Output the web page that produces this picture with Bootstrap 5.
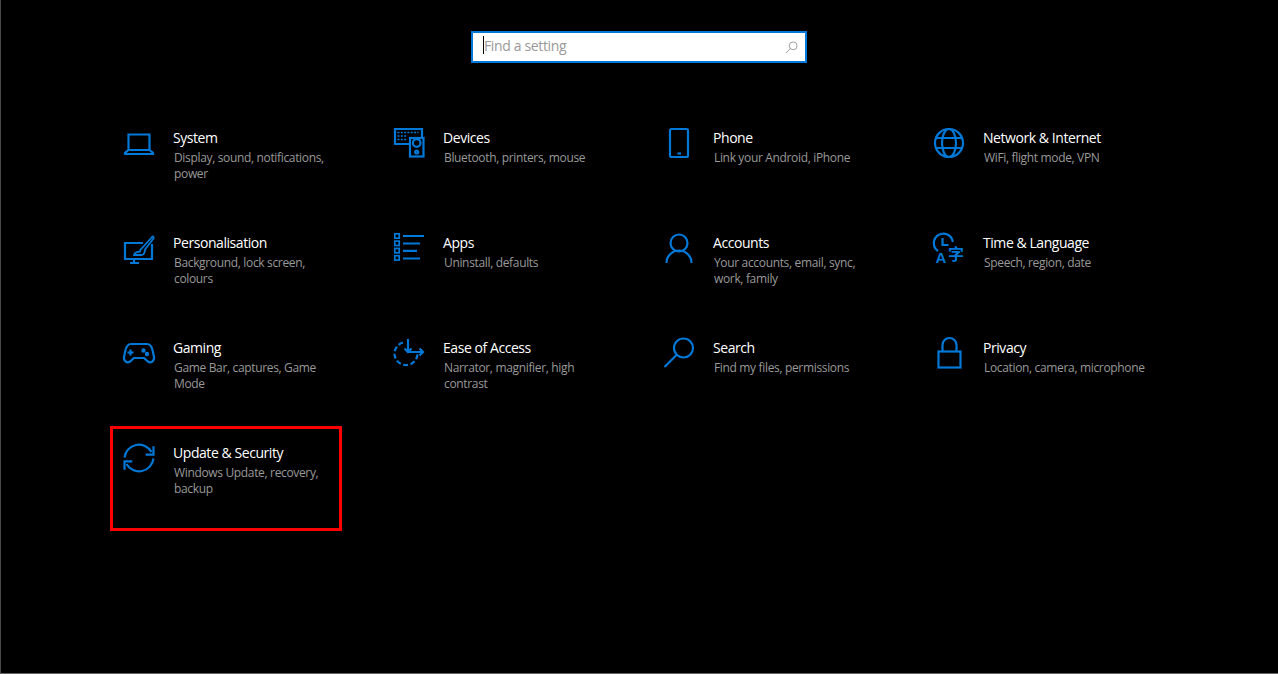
<!DOCTYPE html>
<html lang="en">
<head>
<meta charset="utf-8">
<title>Settings</title>
<link href="https://cdn.jsdelivr.net/npm/bootstrap@5.3.0/dist/css/bootstrap.min.css" rel="stylesheet">
<style>
html,body{height:100%}
body{background:#000;font-family:"Open Sans","Noto Sans",sans-serif;overflow:hidden;box-shadow:inset 1px 0 #4a4a4a,inset 0 -1px #666}
.search-wrap{width:336px;height:32px;margin:31px auto 0 471px}
.search-box{height:32px;border:2px solid #0078d7;border-radius:0;padding:0 30px 3px 11px;font-size:14px;letter-spacing:-.36px;font-family:inherit;box-shadow:none;background:#fff}
.search-box::placeholder{color:#999}
.search-box:focus{border-color:#0078d7;box-shadow:none}
.search-caret{position:absolute;left:12px;top:5px;width:1px;height:18px;background:#000}
.search-glass{position:absolute;right:9px;top:10px;width:13px;height:13px}
.tile-grid{display:grid;grid-template-columns:repeat(4,270px);grid-auto-rows:105px;margin:48px 0 0 110px}
.tile{position:relative;padding:16px 0 0 13px;gap:18px}
.tile-icon{width:32px;height:32px;flex:none;fill:none;stroke:#0078d7;stroke-width:2.2;overflow:visible}
.tile-name{color:#fff;font-size:14px;line-height:20px;margin-top:1px;letter-spacing:-.44px;white-space:nowrap}
.tile-desc{color:#999;font-size:12px;line-height:16px;margin-top:2px;padding-left:1px;letter-spacing:-.34px;white-space:nowrap}
.callout{position:absolute;left:0;top:0;width:232px;height:105px;border:3px solid #f00;pointer-events:none}
</style>
</head>
<body>
<div class="search-wrap position-relative">
  <input class="form-control search-box" type="text" placeholder="Find a setting" aria-label="Find a setting">
  <span class="search-caret"></span>
  <svg class="search-glass" viewBox="0 0 14 14" fill="none" stroke="#999" stroke-width="1"><circle cx="8.800" cy="5.200" r="4.200"/><path d="M5.800 8.200 1 13"/></svg>
</div>
<div class="tile-grid">

  <div class="tile d-flex">
    <svg class="tile-icon" viewBox="0 0 32 32"><path d="M5.500 23V7.500h21V23"/><path d="M5.500 23 2 25.800V27h28v-1.200L26.500 23z"/></svg>
    <div><div class="tile-name">System</div><div class="tile-desc">Display, sound, notifications,<br>power</div></div>
  </div>

  <div class="tile d-flex">
    <svg class="tile-icon" viewBox="0 0 32 32"><path d="M16 17H2V2h27v8"/><rect x="17" y="11" width="13.500" height="18.500"/><circle cx="23.700" cy="16" r="3.800"/><circle cx="23.700" cy="25" r="1.500"/><path d="M4.500 5.500h21M4.500 9h9M4.500 12.500h9" stroke-dasharray="2 1.300" stroke-width="1.500"/></svg>
    <div><div class="tile-name">Devices</div><div class="tile-desc">Bluetooth, printers, mouse</div></div>
  </div>

  <div class="tile d-flex">
    <svg class="tile-icon" viewBox="0 0 32 32"><rect x="7" y="2" width="18" height="28" rx="1.500"/><path d="M14.500 26.500h3.500"/></svg>
    <div><div class="tile-name">Phone</div><div class="tile-desc">Link your Android, iPhone</div></div>
  </div>

  <div class="tile d-flex">
    <svg class="tile-icon" viewBox="0 0 32 32"><circle cx="16" cy="16" r="14"/><ellipse cx="16" cy="16" rx="7" ry="14"/><path d="M3 11h26M3 21h26"/></svg>
    <div><div class="tile-name">Network &amp; Internet</div><div class="tile-desc">WiFi, flight mode, VPN</div></div>
  </div>

  <div class="tile d-flex">
    <svg class="tile-icon" viewBox="0 0 32 32"><path d="M20 11H2v16h27V12"/><path d="M11 27v4M7 31h9"/><path d="M29.500 4.500 20 15c-1.500 2-3 2-3 4.500-1.500 0-6 1-6 3.500h8c3-1 3-3 3-5.500L30.500 6.500c.5-1.500-.5-2.500-1-2z" stroke-width="1.800"/></svg>
    <div><div class="tile-name">Personalisation</div><div class="tile-desc">Background, lock screen,<br>colours</div></div>
  </div>

  <div class="tile d-flex">
    <svg class="tile-icon" viewBox="0 0 32 32" stroke-width="2"><g stroke-width="1.700"><rect x="1.800" y="1.800" width="4.400" height="4.400"/><rect x="1.800" y="9.100" width="4.400" height="4.400"/><rect x="1.800" y="16.400" width="4.400" height="4.400"/><rect x="1.800" y="23.700" width="4.400" height="4.400"/></g><path d="M10 4h21M10 11.500h17M10 18.800h14M10 26.500h17"/></svg>
    <div><div class="tile-name ms-px">Apps</div><div class="tile-desc">Uninstall, defaults</div></div>
  </div>

  <div class="tile d-flex">
    <svg class="tile-icon" viewBox="0 0 32 32"><circle cx="16" cy="11" r="8.500"/><path d="M3.500 31a12.500 12.500 0 0 1 25 0"/></svg>
    <div><div class="tile-name">Accounts</div><div class="tile-desc">Your accounts, email, sync,<br>work, family</div></div>
  </div>

  <div class="tile d-flex">
    <svg class="tile-icon" viewBox="0 0 32 32"><path d="M5 19A9.500 9.500 0 1 1 19.800 10"/><path d="M9.500 6v7h6"/><text x="2.500" y="31" font-family="Liberation Sans" font-size="15" fill="#0078d7" stroke="none" font-weight="700">A</text><text x="15" y="28" font-family="Noto Sans CJK SC" font-size="16" fill="#0078d7" stroke="none" font-weight="700">字</text></svg>
    <div><div class="tile-name">Time &amp; Language</div><div class="tile-desc">Speech, region, date</div></div>
  </div>

  <div class="tile d-flex">
    <svg class="tile-icon" viewBox="0 0 32 32"><path d="M8 7h16c3 0 4.500 2 5.500 6l1.500 7c.5 4-3 6.500-6 4.500L21 21H11l-4 3.500c-3 2-6.500-.5-6-4.500l1.500-7C3.500 9 5 7 8 7z"/><path d="M4.500 15.500h6M7.500 12.500v6"/><circle cx="20.500" cy="13.500" r="1.100" fill="#0078d7"/><circle cx="24" cy="17" r="1.100" fill="#0078d7"/></svg>
    <div><div class="tile-name">Gaming</div><div class="tile-desc">Game Bar, captures, Game<br>Mode</div></div>
  </div>

  <div class="tile d-flex">
    <svg class="tile-icon" viewBox="0 0 32 32"><path d="M10 5.500A11.500 11.500 0 1 0 24.500 16" stroke-dasharray="5 2.500"/><path d="M15 2v13h15"/><path d="M11.500 11.500 15 15l3.500-3.500M26.500 11.500 30 15l-3.500 3.500"/></svg>
    <div><div class="tile-name">Ease of Access</div><div class="tile-desc">Narrator, magnifier, high<br>contrast</div></div>
  </div>

  <div class="tile d-flex">
    <svg class="tile-icon" viewBox="0 0 32 32"><circle cx="20.500" cy="11" r="9.500"/><path d="M13.500 18 1.500 30"/></svg>
    <div><div class="tile-name">Search</div><div class="tile-desc">Find my files, permissions</div></div>
  </div>

  <div class="tile d-flex">
    <svg class="tile-icon" viewBox="0 0 32 32"><rect x="5.500" y="14.500" width="22" height="16"/><path d="M9.500 14V8a7 7 0 0 1 14 0v6"/></svg>
    <div><div class="tile-name">Privacy</div><div class="tile-desc">Location, camera, microphone</div></div>
  </div>

  <div class="tile d-flex">
    <svg class="tile-icon" viewBox="0 0 32 32"><path d="M1.500 15.500A14.500 14.500 0 0 1 28.500 10"/><path d="M30.500 4.300v8.400h-7.800"/><path d="M30.500 16.500A14.500 14.500 0 0 1 3.500 22"/><path d="M1.500 27.700v-8.400h7.800"/></svg>
    <div><div class="tile-name">Update &amp; Security</div><div class="tile-desc">Windows Update, recovery,<br>backup</div></div>
    <span class="callout"></span>
  </div>

</div>
</body>
</html>
